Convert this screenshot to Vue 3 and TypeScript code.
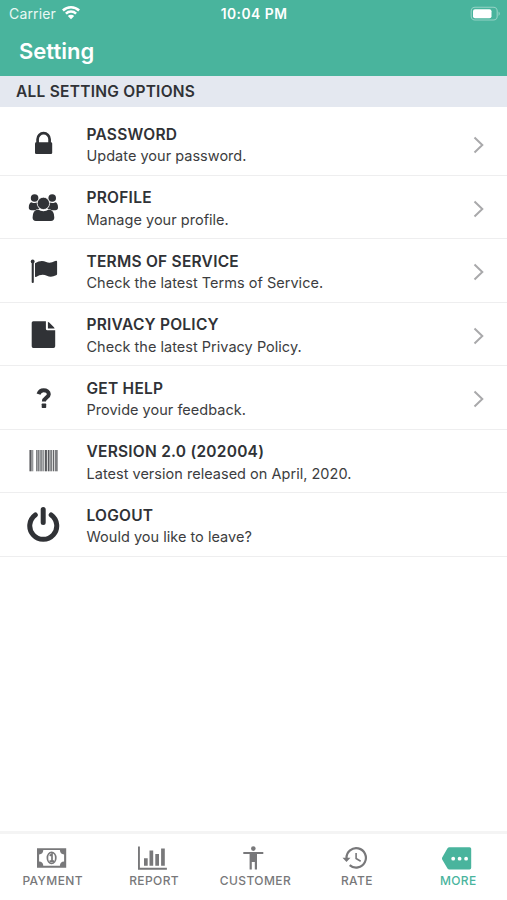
<script setup lang="ts">
import { ref } from 'vue'

type RowIcon = 'lock' | 'users' | 'flag' | 'file' | 'question' | 'barcode' | 'power'
type TabIcon = 'payment' | 'report' | 'customer' | 'rate' | 'more'

interface SettingRow {
  icon: RowIcon
  title: string
  note: string
  link: boolean
}

interface Tab {
  icon: TabIcon
  label: string
}

const rows: SettingRow[] = [
  { icon: 'lock', title: 'PASSWORD', note: 'Update your password.', link: true },
  { icon: 'users', title: 'PROFILE', note: 'Manage your profile.', link: true },
  { icon: 'flag', title: 'TERMS OF SERVICE', note: 'Check the latest Terms of Service.', link: true },
  { icon: 'file', title: 'PRIVACY POLICY', note: 'Check the latest Privacy Policy.', link: true },
  { icon: 'question', title: 'GET HELP', note: 'Provide your feedback.', link: true },
  { icon: 'barcode', title: 'VERSION 2.0 (202004)', note: 'Latest version released on April, 2020.', link: false },
  { icon: 'power', title: 'LOGOUT', note: 'Would you like to leave?', link: false },
]

const tabs: Tab[] = [
  { icon: 'payment', label: 'PAYMENT' },
  { icon: 'report', label: 'REPORT' },
  { icon: 'customer', label: 'CUSTOMER' },
  { icon: 'rate', label: 'RATE' },
  { icon: 'more', label: 'MORE' },
]

const active = ref<TabIcon>('more')
</script>

<template>
  <div class="screen">
    <header class="header">
      <div class="status">
        <div class="carrier">
          <span>Carrier</span>
          <svg class="wifi" width="20" height="16" viewBox="0 0 20 16">
            <path d="M1.9 5.5a11.6 11.6 0 0 1 16.2 0M4.9 8.7a7.3 7.3 0 0 1 10.2 0" fill="none" stroke="currentColor" stroke-width="2.5" />
            <path d="M6.8 11a4.6 4.6 0 0 1 6.4 0L10 14.2z" fill="currentColor" />
          </svg>
        </div>
        <span class="clock">10:04 PM</span>
        <svg class="battery" width="31" height="16" viewBox="0 0 31 16">
          <rect x="1.2" y="1.2" width="26" height="12.8" rx="3.8" fill="none" stroke="currentColor" stroke-opacity=".42" stroke-width="1.1" />
          <rect x="3" y="3.2" width="18.500" height="9" rx="2" fill="currentColor" />
          <path d="M28.600 5.400q2.200 2.200 0 4.500z" fill="currentColor" fill-opacity=".5" />
        </svg>
      </div>
      <h1 class="heading">Setting</h1>
    </header>

    <h2 class="section">ALL SETTING OPTIONS</h2>

    <ul class="list">
      <li v-for="row in rows" :key="row.icon" class="row">
        <svg class="row-icon" width="40" height="40" viewBox="0 0 40 40" fill="currentColor">
          <g v-if="row.icon === 'lock'">
            <path d="M14.600 19v-3.800a6 6 0 0 1 12 0V19" fill="none" stroke="currentColor" stroke-width="2.700" />
            <rect x="12" y="18.300" width="17.200" height="11.800" rx="1.300" />
          </g>
          <g v-else-if="row.icon === 'users'">
            <circle cx="11.6" cy="11" r="3.8" />
            <circle cx="29.2" cy="11" r="3.8" />
            <path d="M8.500 15.200q3 1.700 6.200.1-.5 4.200 1.900 6.500-3 .1-4.500 1.500H8.500Q5.800 23.200 5.800 20.600q0-4.700 2.700-5.400z" />
            <path d="M32.300 15.200q-3 1.700-6.200.1.500 4.200-1.900 6.500 3 .1 4.500 1.500h3.600q2.700-.1 2.700-2.700 0-4.700-2.700-5.400z" />
            <path d="M15 22.500q5.400 3.500 10.800 0 5.500.4 5.500 8.100 0 3.400-3.400 3.400h-15Q9.600 34 9.600 30.600q0-7.700 5.400-8.100z" />
            <circle cx="20.400" cy="16.400" r="6.200" stroke="#fff" stroke-width=".8" />
          </g>
          <g v-else-if="row.icon === 'flag'">
            <circle cx="9.700" cy="10.400" r="1.900" />
            <rect x="8.700" y="10.500" width="2.100" height="21.500" rx="1" />
            <path d="M12 12.300q5.800-4 11.200-1.400 3.700 2 8.900-.9 2-.9 2 .8v12.100q0 .8-1 1.300-5 2.700-9.200.5-5.200-2.400-10.900 1.200-1 .5-1-.6z" />
          </g>
          <g v-else-if="row.icon === 'file'">
            <path d="M10.300 7.200h12.600v7.600q0 1.500 1.500 1.500h7.800v16q0 1.700-1.700 1.700H10.300q-1.600 0-1.600-1.700V8.800q0-1.600 1.600-1.600z" />
            <path d="M24.900 7.700q.7.300 1.300.9l4.500 4.500q.7.700.9 1.300h-6.700z" />
          </g>
          <g v-else-if="row.icon === 'question'">
            <path d="M15.500 16.200c.9-2.700 2.700-4 5.100-4 2.900 0 5.200 1.600 5.200 4 0 3.600-4.900 3.400-4.900 7.300" fill="none" stroke="currentColor" stroke-width="4" />
            <rect x="18.700" y="25.500" width="4.500" height="4.500" rx=".7" />
          </g>
          <g v-else-if="row.icon === 'barcode'" opacity=".8">
            <path d="M6.500 9h2v21.300h-2zM9.500 9h.6v21.300h-.6zM13.300 9h1.100v21.300h-1.100zM15.300 9h1v21.300h-1zM17.500 9h1.100v21.300h-1.100zM19.700 9h.8v21.300h-.8zM22 9h1.900v21.300H22zM25 9h1.400v21.300H25zM27.500 9h1.200v21.300h-1.200zM30 9h.9v21.300H30zM32 9h.7v21.300H32zM33.300 9h1.200v21.300h-1.200z" />
            <path d="M6.500 9h4v21.300h-4zM13.300 9h21.200v21.300H13.300z" opacity=".25" />
          </g>
          <g v-else fill="none" stroke="currentColor" stroke-width="5" stroke-linecap="round">
            <path d="M12.300 9.900a13.500 13.500 0 1 0 15.900 0M20.200 4.500v13" />
          </g>
        </svg>
        <div class="row-text">
          <span class="row-title">{{ row.title }}</span>
          <span class="row-note">{{ row.note }}</span>
        </div>
        <svg v-if="row.link" class="chevron" width="12" height="20" viewBox="0 0 12 20">
          <path d="M1.500 2.500 9.300 10l-7.800 7.500" fill="none" stroke="currentColor" stroke-width="2" />
        </svg>
      </li>
    </ul>

    <nav class="tabs">
      <button v-for="tab in tabs" :key="tab.icon" type="button" class="tab" :class="{ active: tab.icon === active }" @click="active = tab.icon">
        <svg width="32" height="26" viewBox="0 0 32 26" fill="currentColor">
          <g v-if="tab.icon === 'payment'">
            <path fill-rule="evenodd" d="M0 3.200h29.200v19.600H0zm6.300 1.900q-.1 4.200-4.200 4.400v7q4.100.2 4.200 4.300h16.600q.1-4.100 4.200-4.300v-7q-4.100-.2-4.200-4.400z" />
            <ellipse cx="14.600" cy="12.900" rx="4.200" ry="5.500" fill="none" stroke="currentColor" stroke-width="1.700" />
            <path d="M12.700 10.700 15 9v7.200M12.500 16.200h4.600" fill="none" stroke="currentColor" stroke-width="1.700" />
          </g>
          <g v-else-if="tab.icon === 'report'">
            <path d="M0 1.400h1.900v21.400h27v1.900H0zM6 13.200h3.700v7.600H6zM11.500 5.400h3.700v15.400h-3.700zM17.300 9H21v11.800h-3.700zM23.100 3.400h3.700v17.400h-3.700z" />
          </g>
          <g v-else-if="tab.icon === 'customer'">
            <circle cx="14.300" cy="3.600" r="2.300" />
            <path d="M4.300 7h20v2.100H18v15.400h-2.200v-7.400h-3v7.400h-2.200V9.100H4.300z" />
          </g>
          <g v-else-if="tab.icon === 'rate'">
            <path d="M5.500 13.200a9.700 9.700 0 1 1 3.200 6.900" fill="none" stroke="currentColor" stroke-width="2.200" />
            <path d="M1.500 12.700h8l-4 4.300zM14.300 8h1.600v5l4.200 2.500-.8 1.400-5-3z" />
          </g>
          <g v-else>
            <path d="M7.400 2.300h20.200q1.600 0 1.600 1.500v19q0 1.700-1.600 1.700H7.400q-1.200 0-1.900-1L.200 14.500q-.6-1 0-2l5.300-9.200q.7-1 1.900-1z" />
            <g class="dots">
              <circle cx="11.200" cy="13.700" r="1.900" />
              <circle cx="17.600" cy="13.700" r="1.900" />
              <circle cx="24.100" cy="13.700" r="1.900" />
            </g>
          </g>
        </svg>
        <span class="tab-label">{{ tab.label }}</span>
      </button>
    </nav>
  </div>
</template>

<style>
body {
  margin: 0;
  background: #fff;
}
</style>

<style scoped>
.screen {
  display: flex;
  flex-direction: column;
  width: 507px;
  height: 900px;
  overflow: hidden;
  background: #fff;
  color: #303236;
  font-family: Inter, "Liberation Sans", sans-serif;
}

.header {
  box-sizing: border-box;
  height: 76px;
  flex: none;
  background: #49b49d;
  color: #fff;
}

.status {
  display: grid;
  grid-template-columns: 1fr auto 1fr;
  align-items: center;
  height: 27px;
  padding: 0 6px 0 9px;
}

.carrier {
  display: flex;
  align-items: center;
  gap: 5px;
  font-size: 14px;
  letter-spacing: 0.15px;
  color: #e9f8f4;
}

.wifi {
  margin-top: -1px;
  color: #fff;
}

.clock {
  margin-right: 2px;
  font-size: 13.8px;
  font-weight: 600;
  letter-spacing: 0.5px;
}

.battery {
  justify-self: end;
}

.heading {
  margin: 0;
  padding: 9px 19px 0;
  font-size: 22px;
  line-height: 30px;
  font-weight: 600;
}

.section {
  box-sizing: border-box;
  height: 31px;
  flex: none;
  margin: 0;
  padding: 0 16px;
  background: #e4e8f0;
  font-size: 15.5px;
  line-height: 32px;
  font-weight: 600;
  letter-spacing: 0.25px;
}

.list {
  flex: 1;
  margin: 0;
  padding: 5px 0 0;
  list-style: none;
}

.row {
  box-sizing: border-box;
  display: flex;
  height: 63.5px;
  padding: 11.5px 22px 0 23px;
  border-bottom: 1.5px solid #eeeeef;
}

.row-icon {
  flex: none;
  margin-right: 23.5px;
}

.row-text {
  display: flex;
  flex: 1;
  flex-direction: column;
}

.row-title {
  font-size: 15.5px;
  line-height: 21.5px;
  font-weight: 600;
  letter-spacing: 0.24px;
}

.row-note {
  font-size: 14.5px;
  line-height: 22px;
  letter-spacing: 0.02px;
  color: #3c3d40;
}

.chevron {
  margin-top: 11.5px;
  color: #a9a9ab;
}

.tabs {
  box-sizing: border-box;
  display: grid;
  grid-template-columns: repeat(5, 1fr);
  height: 69px;
  flex: none;
  padding: 11px 0 0;
  border-top: 3px solid #f4f4f4;
}

.tab {
  display: flex;
  flex-direction: column;
  align-items: center;
  justify-content: flex-start;
  gap: 2px;
  padding: 0 0 0 4px;
  border: 0;
  background: none;
  color: #78787a;
  font-family: inherit;
}

.tab svg {
  flex: none;
}

.tab-label {
  font-size: 12px;
  line-height: 16px;
  font-weight: 500;
  letter-spacing: 0.4px;
}

.tab.active {
  color: #49b49d;
}

.dots {
  fill: #fff;
}
</style>
